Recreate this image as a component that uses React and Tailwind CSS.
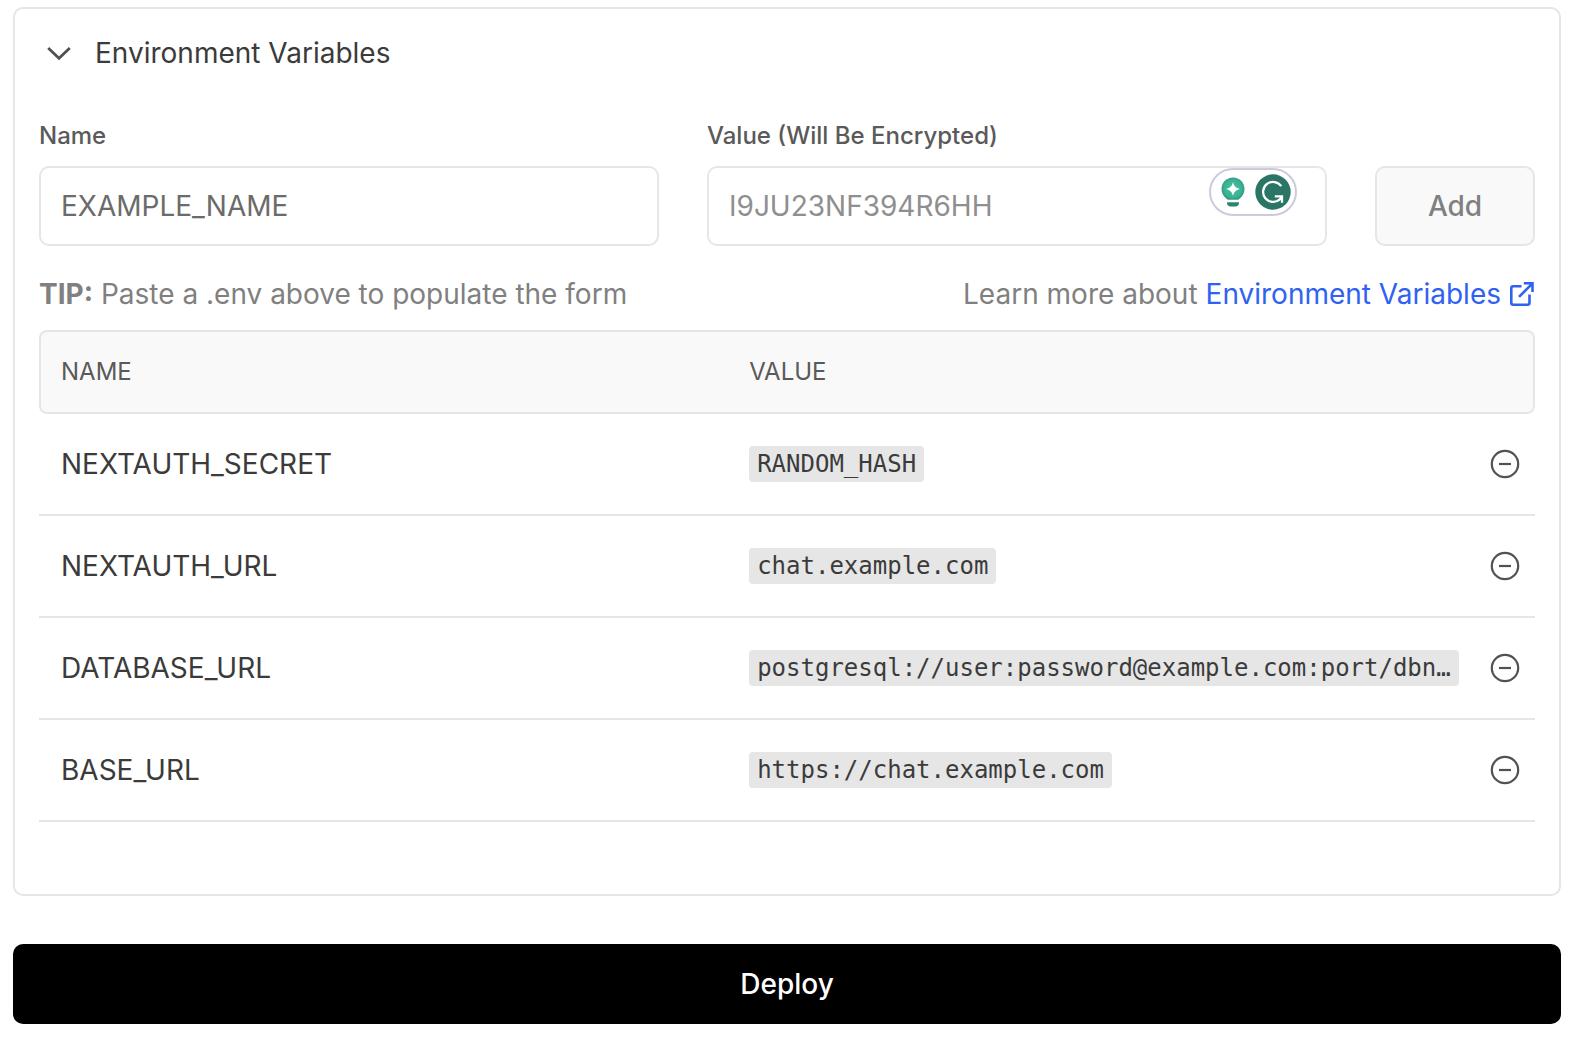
const variables = [
  { name: "NEXTAUTH_SECRET", value: "RANDOM_HASH" },
  { name: "NEXTAUTH_URL", value: "chat.example.com" },
  { name: "DATABASE_URL", value: "postgresql://user:password@example.com:port/dbn…" },
  { name: "BASE_URL", value: "https://chat.example.com" },
];

function ChevronIcon() {
  return (
    <svg width="24" height="24" viewBox="0 0 24 24" fill="none" stroke="#525252" strokeWidth="2.8" aria-hidden="true">
      <path d="M1.2 7 12 17.300 22.8 7" />
    </svg>
  );
}

function ExternalIcon() {
  return (
    <svg width="26" height="26" viewBox="0 0 26 26" fill="none" stroke="currentColor" strokeWidth="2.600" aria-hidden="true">
      <path d="M12.5 5.300H4.300a2 2 0 0 0-2 2v14.5a2 2 0 0 0 2 2H18.5a2 2 0 0 0 2-2v-8.3" />
      <path d="M14.800 2.300h8.700v8.700M23.5 2.300 10 15.8" />
    </svg>
  );
}

function MinusCircleIcon() {
  return (
    <svg width="30" height="30" viewBox="0 0 30 30" fill="none" stroke="#525252" strokeWidth="2.200" aria-hidden="true">
      <circle cx="15" cy="15" r="13.2" />
      <path d="M9 15h12" />
    </svg>
  );
}

function BulbIcon() {
  return (
    <svg width="24" height="30" viewBox="0 0 24 30" aria-hidden="true">
      <defs>
        <radialGradient id="bulb" cx="0.5" cy="0.5" r="0.55">
          <stop offset="0" stopColor="#3fc4a2" />
          <stop offset="0.7" stopColor="#3bb294" />
          <stop offset="1" stopColor="#2b9078" />
        </radialGradient>
      </defs>
      <path d="M12 .5C5.600 .5.500 5.600.500 12c0 4.200 2 7.200 5 9.800.7.600 1.200 1 2 1h9c.8 0 1.300-.4 2-1 3-2.600 5-5.600 5-9.800C23.500 5.600 18.400.5 12 .5Z" fill="url(#bulb)" />
      <path d="M12 5c1 4 2.500 5.800 7 7-4.500 1.200-6 3-7 7-1-4-2.500-5.800-7-7 4.500-1.200 6-3 7-7Z" fill="#fff" />
      <path d="M6 25.300h12v.7c0 2-1.500 3.500-3.500 3.500h-5C7.500 29.500 6 28 6 26Z" fill="#2b8470" />
    </svg>
  );
}

function GrammarIcon() {
  return (
    <svg width="36" height="36" viewBox="0 0 36 36" fill="none" aria-hidden="true">
      <circle cx="18" cy="18" r="17.700" fill="#2b7566" />
      <path d="M26.300 12.200A10 10 0 1 0 24.800 25.300L27 22.500" stroke="#fff" strokeWidth="2.300" />
      <path d="M19.800 22.300H27v6.500" stroke="#fff" strokeWidth="2.300" />
    </svg>
  );
}

export default function App() {
  return (
    <main className="flex flex-col gap-12 bg-white px-[13px] pt-[7px] font-['Inter',sans-serif] text-[28px] leading-10 text-[#3b3b3b]">
      <section className="rounded-[10px] border-2 border-[#e6e6e6] px-6 pt-6 pb-[72px]">
        <h2>
          <button type="button" aria-expanded="true" className="flex items-center gap-6 px-2">
            <ChevronIcon />
            Environment Variables
          </button>
        </h2>

        <form className="mt-[45px] flex items-end gap-12" onSubmit={(e) => e.preventDefault()}>
          <div className="flex min-w-0 flex-1 flex-col gap-3">
            <label htmlFor="env-name" className="text-2xl leading-9 font-medium text-[#5a5a5a]">Name</label>
            <input id="env-name" placeholder="EXAMPLE_NAME" className="h-20 w-full rounded-[10px] border-2 border-[#e6e6e6] px-5 placeholder:text-[#6b6b6b]" />
          </div>
          <div className="flex min-w-0 flex-1 flex-col gap-3">
            <label htmlFor="env-value" className="text-2xl leading-9 font-medium text-[#5a5a5a]">Value (Will Be Encrypted)</label>
            <div className="relative">
              <input id="env-value" placeholder="I9JU23NF394R6HH" className="h-20 w-full rounded-[10px] border-2 border-[#e6e6e6] px-5 placeholder:text-[#8f8f8f]" />
              <div className="absolute top-0.5 right-[30px] flex h-12 w-[88px] items-center gap-2.5 rounded-full border-2 border-[#cbcbdd] bg-white pl-2.5">
                <BulbIcon />
                <GrammarIcon />
              </div>
            </div>
          </div>
          <button type="submit" className="h-20 w-40 rounded-[10px] border-2 border-[#e6e6e6] bg-[#f9f9f9] font-medium text-[#808080]">Add</button>
        </form>

        <div className="mt-7 flex justify-between text-[#808080]">
          <p><strong className="font-bold">TIP:</strong> Paste a .env above to populate the form</p>
          <p className="flex gap-2">
            Learn more about
            <a href="#docs" className="flex items-center gap-2 text-[#2f62f0]">
              Environment Variables
              <ExternalIcon />
            </a>
          </p>
        </div>

        <table className="mt-4 w-full table-fixed border-separate border-spacing-0 text-left">
          <thead className="text-2xl text-[#5a5a5a]">
            <tr className="h-[84px]">
              <th scope="col" className="w-[46%] rounded-l-lg border-y-2 border-l-2 border-[#e6e6e6] bg-[#f9f9f9] pl-5 font-normal">NAME</th>
              <th scope="col" className="border-y-2 border-[#e6e6e6] bg-[#f9f9f9] pl-[22px] font-normal">VALUE</th>
              <th scope="col" aria-label="Remove" className="w-[76px] rounded-r-lg border-y-2 border-r-2 border-[#e6e6e6] bg-[#f9f9f9]" />
            </tr>
          </thead>
          <tbody>
            {variables.map((v) => (
              <tr key={v.name} className="h-[102px]">
                <td className="border-b-2 border-[#e6e6e6] pl-[22px]">{v.name}</td>
                <td className="border-b-2 border-[#e6e6e6] pl-[22px]">
                  <code className="block h-9 w-fit max-w-full truncate rounded-sm bg-[#e6e6e6] px-2 font-['DejaVu_Sans_Mono',monospace] text-2xl leading-9">{v.value}</code>
                </td>
                <td className="border-b-2 border-[#e6e6e6] pr-[15px]">
                  <button type="button" aria-label={`Remove ${v.name}`} className="ml-auto block">
                    <MinusCircleIcon />
                  </button>
                </td>
              </tr>
            ))}
          </tbody>
        </table>
      </section>

      <button type="button" className="h-20 rounded-[10px] bg-black font-medium text-white">Deploy</button>
    </main>
  );
}
